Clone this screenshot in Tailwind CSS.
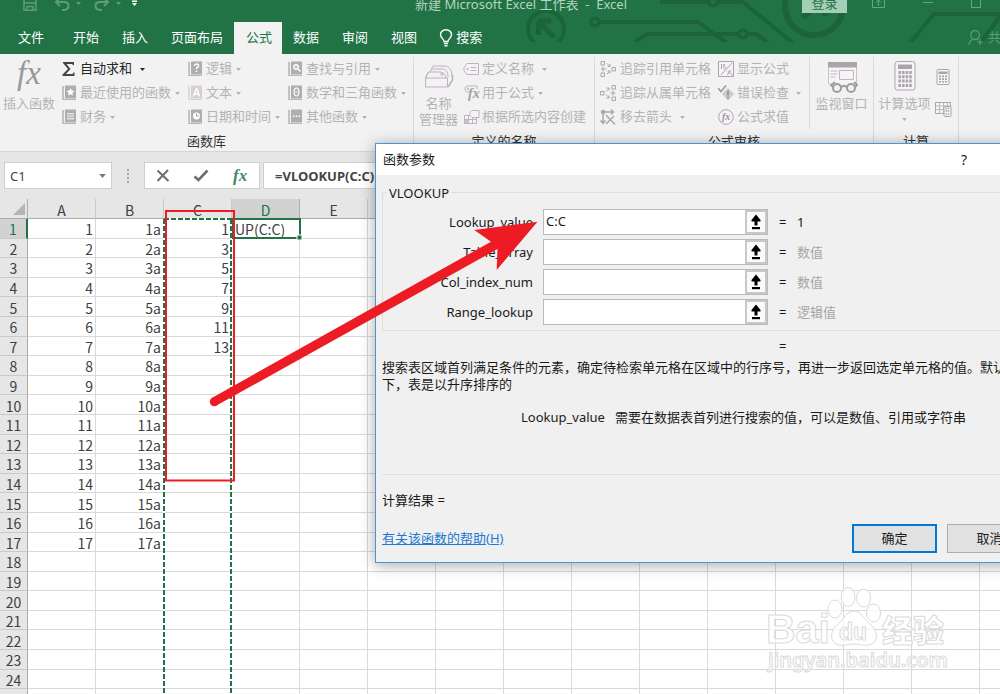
<!DOCTYPE html>
<html lang="zh-CN">
<head>
<meta charset="utf-8">
<title>新建 Microsoft Excel 工作表 - Excel</title>
<script src="https://cdn.jsdelivr.net/npm/@tailwindcss/browser@4"></script>
</head>
<body class="relative flex h-screen flex-col overflow-hidden bg-[#e6e6e6] font-['Noto_Sans','Noto_Sans_CJK_SC',sans-serif] text-[13px] text-[#262626]">

<!-- Shared icon shapes -->
<svg class="hidden" aria-hidden="true">
  <symbol id="book" viewBox="0 0 14 16"><path d="M0 1h2v14H0z" fill="#c4c1c4"/><path d="M3 .5h11v13H3z" fill="#b0adb0"/><path d="M1 14.500h13" stroke="#b8b5b8" fill="none"/></symbol>
  <symbol id="book-light" viewBox="0 0 14 16"><path d="M0 1h2v14H0z" fill="#dedade"/><path d="M3 .5h11v13H3z" fill="#d6d0d6"/><path d="M1 14.500h13" stroke="#d6d0d6" fill="none"/></symbol>
  <symbol id="caret" viewBox="0 0 5 3"><path d="M0 0h5L2.500 3z" fill="currentColor"/></symbol>
  <symbol id="pick" viewBox="0 0 12 16"><path d="M6 .5 10.500 6v1.500H7.500V11.500h-3V7.500H1.500V6z" fill="#000"/><path d="M2 13h8v2.200H2z" fill="#000"/></symbol>
</svg>

<header class="relative shrink-0 overflow-hidden bg-[#217346] text-white">
  <svg class="absolute left-[500px] top-0 h-[42px] w-[520px]" viewBox="500 0 520 42" fill="none" stroke="#1d6339" stroke-width="4" aria-hidden="true">
    <circle cx="546" cy="29" r="18"/>
    <path d="M537 21h14M538.500 21v14M539 22l15 15" stroke-width="5"/>
    <circle cx="595" cy="22" r="4" stroke-width="3"/>
    <path d="M599 22h99l29 21M634 43l13-9h92M748 34h8l12 9M660 2h49M718 2h25l50 41"/>
    <circle cx="743" cy="34" r="4" stroke-width="3"/>
    <circle cx="713" cy="2" r="4" stroke-width="3"/>
    <circle cx="814" cy="6" r="29" stroke-width="6"/>
    <path d="M803 18l16-16M825 16V0M810 3h16" stroke-width="6"/>
    <path d="M910 43l24-29h90M980 43l22-29"/>
  </svg>

  <div class="relative flex h-[22px] items-start">
    <div class="flex w-[415px] shrink-0 gap-2 pl-[22px] text-[#5f9c7a]">
      <svg class="h-3 w-4" viewBox="0 0 16 12" fill="none" stroke="currentColor" stroke-width="1.500"><path d="M2-2v12.200h12V-2M2 3h12M5 10V6.500h6V10"/></svg>
      <svg class="ml-2 h-3 w-7" viewBox="0 0 28 12" fill="none" stroke="currentColor" stroke-width="2"><path d="M6-2 2 2l4 4M2 2h8c6 0 6 7 0 8H8"/><path d="M22 2h5l-2.500 3z" fill="currentColor" stroke="none"/></svg>
      <svg class="ml-1 h-3 w-7" viewBox="0 0 28 12" fill="none" stroke="currentColor" stroke-width="2"><path d="M10-2l4 4-4 4M14 2H6c-6 0-6 7 0 8h2"/><path d="M22 2h5l-2.500 3z" fill="currentColor" stroke="none"/></svg>
      <svg class="-ml-1 h-2 w-5" viewBox="0 0 20 8" fill="#fff"><path d="M6 .5h5V2H6zM6 3h5L8.500 6z"/></svg>
    </div>
    <p class="-mt-2 w-[387px] shrink-0 whitespace-pre leading-6 text-[#b4d3c1]">新建 Microsoft Excel 工作表  -  Excel</p>
    <div class="flex flex-1 items-start text-[#6aa384]">
      <button class="-mt-2 h-[21px] w-[45px] shrink-0 bg-[#a3cfb6] leading-5 text-[#217346]">登录</button>
      <svg class="ml-[25px] h-3 w-[14px] shrink-0" viewBox="0 0 14 12" fill="none" stroke="currentColor"><path d="M.5-4v11.500h12V-4M6.500 6V0M4 2.500 6.500 0 9 2.500"/></svg>
      <svg class="ml-9 h-3 w-[14px] shrink-0" viewBox="0 0 14 12" stroke="currentColor"><path d="M1 2.500h10"/></svg>
      <svg class="ml-[35px] h-3 w-[14px] shrink-0" viewBox="0 0 14 12" fill="none" stroke="currentColor"><path d="M.5-4v11.500h9V-4"/></svg>
    </div>
  </div>

  <nav class="relative flex h-8 items-stretch whitespace-nowrap">
    <button class="pl-[18px] pr-[17px]">文件</button>
    <button class="pl-3 pr-[11px]">开始</button>
    <button class="pl-3 pr-[11px]">插入</button>
    <button class="pl-3 pr-[11px]">页面布局</button>
    <button class="bg-[#f2f2f2] pl-3 pr-[10px] text-[#217346]">公式</button>
    <button class="pl-[11px] pr-[11px]">数据</button>
    <button class="pl-3 pr-[11px]">审阅</button>
    <button class="pl-3 pr-[11px]">视图</button>
    <button class="flex items-center gap-[3px] pl-[11px]">
      <svg class="h-[18px] w-[14px]" viewBox="0 0 14 18" fill="none" stroke="#fff" stroke-width="1.400"><path d="M5 12.500c0-2.500-3.500-3.500-3.500-7a5.500 4.800 0 0 1 11 0c0 3.500-3.500 4.500-3.500 7zM5 14.500h4M5.500 16.700h3"/></svg>
      搜索
    </button>
    <button class="absolute -right-3.5 top-1.5 flex items-center gap-1 text-[#5f9c7a]">
      <svg class="h-4 w-4" viewBox="0 0 16 16" fill="none" stroke="currentColor" stroke-width="1.200"><circle cx="7" cy="5" r="4.300"/><path d="M1 15c0-3 2-5 4.500-6M9 9l1 1M12 9v6M9 12h6"/></svg>
      共享
    </button>
  </nav>
</header>

<section class="flex h-[98px] shrink-0 border-b border-[#d5d5d5] bg-[#f2f2f2] whitespace-nowrap pt-[3px] text-[#b4b2b4]" aria-label="公式">

  <!-- Function library -->
  <div class="flex w-[414px] shrink-0 flex-col border-r border-[#dadada]">
    <div class="flex h-[72px]">
      <button class="flex w-[62px] flex-col items-center pr-1 leading-4">
        <svg class="h-[38px] w-9" viewBox="0 0 36 38"><text x="6" y="27" font-family="Liberation Serif" font-style="italic" font-size="33" fill="#9a989a">fx</text></svg>
        插入函数
      </button>
      <div class="grid flex-1 grid-flow-col grid-cols-[126px_100px_1fr] grid-rows-[repeat(3,24px)]">
        <button class="flex items-center gap-1 text-[#262626]"><svg class="h-4 w-[14px]" viewBox="0 0 14 16"><path d="M1 1h11v3h-1L10 3H4.500l4 5-4.500 5h6.500l1-1.500h1V15H.5v-1.500L6 8 1 2z" fill="#444"/></svg>自动求和<svg class="ml-1 h-[3px] w-[5px]"><use href="#caret"/></svg></button>
        <button class="flex items-center gap-1"><svg class="h-4 w-[14px]" viewBox="0 0 14 16"><use href="#book"/><path d="m8.500 3 1.200 2.600 2.800.3-2.100 1.900.6 2.800-2.500-1.400L6 10.600l.6-2.800-2.100-1.900 2.800-.3z" fill="#fff"/></svg>最近使用的函数<svg class="h-[3px] w-[5px]"><use href="#caret"/></svg></button>
        <button class="flex items-center gap-1"><svg class="h-4 w-[14px]" viewBox="0 0 14 16"><use href="#book"/><path d="M5 4h7v6.500H5z" fill="#e4e1e4"/><path d="M5 6h7M5 8.300h7" stroke="#b0adb0"/></svg>财务<svg class="h-[3px] w-[5px]"><use href="#caret"/></svg></button>
        <button class="flex items-center gap-1"><svg class="h-4 w-[14px]" viewBox="0 0 14 16"><use href="#book"/><path d="M6.500 5c0-2.800 4.500-2.300 4 0-.3 1.200-2 1.300-2 3M8.500 9.500v1.500" fill="none" stroke="#fff" stroke-width="1.500"/></svg>逻辑<svg class="h-[3px] w-[5px]"><use href="#caret"/></svg></button>
        <button class="flex items-center gap-1"><svg class="h-4 w-[14px]" viewBox="0 0 14 16"><use href="#book-light"/><path d="M5.500 11.500 8 4h1l2.500 7.500M6.500 9h4" fill="none" stroke="#fff" stroke-width="1.400"/></svg>文本<svg class="h-[3px] w-[5px]"><use href="#caret"/></svg></button>
        <button class="flex items-center gap-1"><svg class="h-4 w-[14px]" viewBox="0 0 14 16"><use href="#book"/><circle cx="8.500" cy="7" r="3.500" fill="#fff"/><path d="M8.500 4.500V7h2.500" fill="none" stroke="#aaa7aa"/></svg>日期和时间<svg class="h-[3px] w-[5px]"><use href="#caret"/></svg></button>
        <button class="flex items-center gap-1"><svg class="h-4 w-[14px]" viewBox="0 0 14 16"><use href="#book"/><circle cx="8" cy="6" r="2.400" fill="#c9c6c9" stroke="#fff" stroke-width="1.200"/><path d="m10 8 2.500 2.500" stroke="#fff" stroke-width="1.500"/></svg>查找与引用<svg class="h-[3px] w-[5px]"><use href="#caret"/></svg></button>
        <button class="flex items-center gap-1"><svg class="h-4 w-[14px]" viewBox="0 0 14 16"><use href="#book"/><ellipse cx="8.500" cy="7" rx="2.400" ry="4" fill="none" stroke="#fff" stroke-width="1.200"/><path d="M7.500 7h2" stroke="#fff"/></svg>数学和三角函数<svg class="h-[3px] w-[5px]"><use href="#caret"/></svg></button>
        <button class="flex items-center gap-1"><svg class="h-4 w-[14px]" viewBox="0 0 14 16"><use href="#book"/><path d="M5 6.500h1.500V8H5zM7.800 6.500h1.500V8H7.800zM10.600 6.500h1.500V8h-1.500z" fill="#fff"/></svg>其他函数<svg class="h-[3px] w-[5px]"><use href="#caret"/></svg></button>
      </div>
    </div>
    <h2 class="pt-[3px] text-center leading-[18px] text-[#333]">函数库</h2>
  </div>

  <!-- Defined names -->
  <div class="flex w-[181px] shrink-0 flex-col border-r border-[#dadada]">
    <div class="flex h-[72px]">
      <button class="flex w-[49px] flex-col items-center leading-4">
        <svg class="h-[38px] w-[30px]" viewBox="0 0 30 38" fill="#f5f0f5" stroke="#b9b5b9"><path d="m6 15 3-6h11c5 0 8 4 8 9v6l-4 6"/><path d="M8 12h10c4 0 6 3 6 8M5 15h10c5 0 7 3 7 8" fill="none"/><path d="M1.500 21h22v9h-22z"/><path d="m1.500 21 3-6M24 30l4.500-7v-5" stroke-width="1.500"/><circle cx="18" cy="17" r="1.200"/></svg>
        <span class="block whitespace-pre-line">名称
管理器</span>
      </button>
      <div class="grid flex-1 grid-rows-[repeat(3,24px)]">
        <button class="flex items-center gap-0.5"><svg class="h-4 w-[17px]" viewBox="0 0 17 16" fill="#f7f2f7" stroke="#b9b5b9"><path d="M4 2.500h11.500v11H4L1 9.500v-3z"/><path d="M7.500 6.500h6M7.500 9.500h6"/><circle cx="4.500" cy="8" r=".8"/></svg>定义名称<svg class="ml-1.5 h-[3px] w-[5px]"><use href="#caret"/></svg></button>
        <button class="flex items-center gap-0.5"><svg class="h-4 w-[17px]" viewBox="0 0 17 16"><path d="M2 5.500v-3l3-1.500h9v3M2 5.500 5 8" fill="#f7f2f7" stroke="#b9b5b9"/><circle cx="5" cy="4" r=".8" fill="none" stroke="#b9b5b9"/><text x="5" y="13" font-family="Liberation Serif" font-style="italic" font-weight="bold" font-size="14" fill="#a3a0a3">fx</text></svg>用于公式<svg class="ml-0.5 h-[3px] w-[5px]"><use href="#caret"/></svg></button>
        <button class="flex items-center gap-0.5"><svg class="h-4 w-[17px]" viewBox="0 0 17 16" fill="#f7f2f7" stroke="#b9b5b9"><path d="M1.500 6.500h12v8h-12z"/><path d="M1.500 10.500h4v4h-4z" fill="#c7c3c7"/><path d="M5.500 6.500v8M9.500 6.500v8M1.500 10.500h12"/><path d="M9 1.500h7v7H9l-2-2v-3z"/></svg>根据所选内容创建</button>
      </div>
    </div>
    <h2 class="pt-[3px] text-center leading-[18px] text-[#333]">定义的名称</h2>
  </div>

  <!-- Formula auditing -->
  <div class="flex w-[279px] shrink-0 flex-col border-r border-[#dadada]">
    <div class="flex h-[72px]">
      <div class="grid w-[215px] grid-flow-col grid-cols-[118px_1fr] grid-rows-[repeat(3,24px)] border-r border-[#dadada] pl-[5px]">
        <button class="flex items-center gap-1"><svg class="h-4 w-4" viewBox="0 0 16 16" fill="none" stroke="#a9a6a9"><path d="M1 .5h3.500V4H1zM1 12h3.500v3.500H1zM12 6.500h3.500V10H12zM1 8h5M3 5.500v5M7 2.500l3 3M7 13l3-3M10 3v2.500H7.500M10 12.500V10H7.500"/></svg>追踪引用单元格</button>
        <button class="flex items-center gap-1"><svg class="h-4 w-4" viewBox="0 0 16 16" fill="none" stroke="#a9a6a9"><path d="M12 .5h3.500V4H12zM12 12h3.500v3.500H12zM.5 6.500H4V10H.5zM10.500 8h5M13 5.500v5M6 6.500l3-3M6 9.500l3 3M6.500 3H9v2.500M6.500 13H9v-2.500"/></svg>追踪从属单元格</button>
        <button class="flex items-center gap-1"><svg class="h-4 w-4" viewBox="0 0 16 16" fill="none" stroke="#a9a6a9" stroke-width="1.400"><path d="M2 3h11M11 .5 13.500 3 11 5.500M3 3v11M.5 11.500 3 14.500l2.500-3M6 6l9 9.500M14 7l-8 8"/><circle cx="3" cy="3" r="1.500" fill="#a9a6a9"/></svg>移去箭头<svg class="ml-1 h-[3px] w-[5px]"><use href="#caret"/></svg></button>
        <button class="flex items-center gap-[3px]"><svg class="h-4 w-4" viewBox="0 0 16 16" fill="#f7f2f7" stroke="#a9a6a9"><path d="M.5.5h15v15H.5z"/><path d="M3.500 3v5M7 3.500H5.500v2h1.500c1.500 2-.5 3-1.500 2.200M14 2 3 14M9 14c2 0 1.500-5 4-5M9.500 11h3M12 12l3 2.500"/></svg>显示公式</button>
        <button class="flex items-center gap-[3px]"><svg class="h-4 w-4" viewBox="0 0 16 16"><path d="m10 3 6 6-6 6.500L4 9z" fill="#cdc9cd"/><path d="M10 5.500v5M10 11.500v2" stroke="#8f8c8f" stroke-width="1.500"/><path d="m0 3 3 3.500L8 .5" fill="none" stroke="#9a979a" stroke-width="1.500"/></svg>错误检查<svg class="ml-1 h-[3px] w-[5px]"><use href="#caret"/></svg></button>
        <button class="flex items-center gap-[3px]"><svg class="h-4 w-4" viewBox="0 0 16 16"><circle cx="8" cy="8" r="7.300" fill="#f7f2f7" stroke="#a9a6a9"/><text x="4" y="11" font-family="Liberation Serif" font-style="italic" font-weight="bold" font-size="10" fill="#989598">fx</text></svg>公式求值</button>
      </div>
      <button class="flex flex-1 flex-col items-center leading-4">
        <svg class="h-[38px] w-8" viewBox="0 0 32 38"><path d="M2.500 5.500h28v21h-28z" fill="#f8f3f8" stroke="#c5c1c5"/><path d="M2 5h29v5.500H2z" fill="#a9a6a9"/><path d="M13.500 13.500h14v9h-14zM4.500 14h7M4.500 17h7M4.500 20h5" fill="none" stroke="#bcb8bc"/><path d="M4 32V26h28v8H4z" fill="#f2f2f2"/><g fill="#f2f2f2" stroke="#a09da0" stroke-width="2"><circle cx="11" cy="31" r="4"/><circle cx="25" cy="31" r="4"/><path d="M15 30c1.500-1.500 4.500-1.500 6 0M7 30l-2-2 4-3M29 30l2-2-3-3" fill="none"/></g></svg>
        监视窗口
      </button>
    </div>
    <h2 class="pt-[3px] text-center leading-[18px] text-[#333]">公式审核</h2>
  </div>

  <!-- Calculation -->
  <div class="flex w-[85px] shrink-0 flex-col border-r border-[#dadada]">
    <div class="flex h-[72px]">
      <button class="flex w-[61px] flex-col items-center leading-4">
        <svg class="h-[38px] w-6" viewBox="0 0 24 38"><rect x="2" y="4.500" width="20" height="28.500" rx="2.500" fill="#f8f3f8" stroke="#a9a6a9"/><path d="M5 7.500h14V12H5z" fill="#a9a6a9"/><path d="M6.700 14v16M10.300 14v16M13.900 14v16M17.500 14v16" stroke="#a9a6a9" stroke-width="2.600" stroke-dasharray="3 1.300"/></svg>
        计算选项
        <svg class="mt-[7px] h-[3px] w-[5px]"><use href="#caret"/></svg>
      </button>
      <div class="flex flex-col gap-4 pt-3">
        <button aria-label="开始计算"><svg class="h-4 w-[17px]" viewBox="0 0 17 16"><rect x="2" y=".5" width="12" height="15" rx="1" fill="#f8f3f8" stroke="#a9a6a9"/><path d="M3.500 2.500h9V5h-9z" fill="#a9a6a9"/><path d="M5 6.500v8M8 6.500v8M11 6.500v8" stroke="#a9a6a9" stroke-width="2" stroke-dasharray="1.700 1"/></svg></button>
        <button aria-label="计算工作表"><svg class="h-4 w-[17px]" viewBox="0 0 17 16" fill="#f8f3f8" stroke="#a9a6a9"><path d="M.5 1.500h15v11H.5z"/><path d="M4.500 1.500v11M8.500 1.500v11M12.500 1.500v11M.5 5h15M.5 8.500h15" stroke="#bcb8bc"/><rect x="9" y="5.500" width="7" height="10" rx="1"/><path d="M10.500 7.500h4M10.500 10h4M10.500 13h4" stroke-dasharray="1.500 .7" stroke-width="1.500"/></svg></button>
      </div>
    </div>
    <h2 class="pt-[3px] text-center leading-[18px] text-[#333]">计算</h2>
  </div>
</section>

<!-- Formula bar -->
<div class="flex h-[47px] shrink-0 items-start pl-1 pt-[10px]">
  <div class="relative w-[108px] shrink-0">
    <input aria-label="名称框" value="C1" class="h-[27px] w-full border border-[#cfcfcf] bg-white pl-[5px] text-[#444]">
    <svg class="absolute right-1.5 top-3 h-1 w-[7px]" viewBox="0 0 5 3" fill="#777"><path d="M0 0h5L2.500 3z"/></svg>
  </div>
  <svg class="h-[27px] w-8 shrink-0" viewBox="0 0 32 27" fill="#a6a6a6"><path d="M15 7h2v2h-2zM15 11h2v2h-2zM15 15h2v2h-2zM15 19h2v2h-2z"/></svg>
  <div class="flex h-[27px] w-[116px] shrink-0 items-center justify-between border border-[#cfcfcf] bg-white pl-[11px] pr-3">
    <button aria-label="取消"><svg class="h-[13px] w-3.5" viewBox="0 0 14 13"><path d="M1.500 1.500 12.500 12M12 1 1.500 12" stroke="#6e6e6e" stroke-width="2" fill="none"/></svg></button>
    <button aria-label="输入"><svg class="h-[13px] w-4" viewBox="0 0 16 13"><path d="M1.500 7.500 5.500 11 14.500 1.500" stroke="#6e6e6e" stroke-width="2.600" fill="none"/></svg></button>
    <button aria-label="插入函数"><svg class="h-5 w-4" viewBox="0 0 16 20"><text x="2" y="15" font-family="Liberation Serif" font-style="italic" font-weight="bold" font-size="17" fill="#3f8a60">fx</text></svg></button>
  </div>
  <input aria-label="编辑栏" value="=VLOOKUP(C:C)" class="ml-[3px] h-[27px] flex-1 border border-[#cfcfcf] bg-white pl-[11px] font-bold text-[#444]">
</div>

<!-- Worksheet -->
<main class="relative flex-1 overflow-hidden bg-white">
  <table class="h-[510px] w-[1048px] table-fixed border-separate border-spacing-0 font-['Noto_Sans_CJK_SC',sans-serif] text-[14px] leading-[14px] text-[#404040]">
    <colgroup id="cols"><col class="w-7"></colgroup>
    <thead><tr id="letters" class="h-5 bg-[#e6e6e6]"></tr></thead>
    <tbody id="rows"></tbody>
  </table>
  <svg class="absolute inset-0 h-full w-full" fill="none" aria-hidden="true">
    <path d="M232 20h68v19h-68z" stroke="#217346" stroke-width="2"/>
    <path d="M297 36h5v5h-5z" fill="#217346" stroke="#fff"/>
    <path d="M164 20h68M164 20v500M231 20v500" stroke="#fff" stroke-width="2"/>
    <path d="M164 20h68M164 20v500M231 20v500" stroke="#217346" stroke-width="2" stroke-dasharray="5 2"/>
  </svg>
</main>

<!-- Watermark -->
<svg class="absolute bottom-0 right-0 h-[120px] w-60" viewBox="760 574 240 120" fill="#fff" fill-opacity=".75" stroke="#dadada" stroke-linejoin="round" aria-hidden="true">
  <g font-family="Liberation Sans" font-weight="bold">
    <text x="766" y="643" font-size="41">Bai</text>
    <ellipse cx="835" cy="609" rx="7" ry="9"/><ellipse cx="848" cy="597" rx="7" ry="9.500"/><ellipse cx="863.500" cy="598" rx="7" ry="9"/><ellipse cx="873.500" cy="613" rx="7" ry="9"/>
    <path d="M854 611c8 0 10 9 17 14 8 7 7 18-2 20-7 1-9-1-15-1s-9 2-15 1c-9-2-10-13-2-20 7-5 9-14 17-14z"/>
    <text x="839" y="640" font-size="23">du</text>
  </g>
  <text x="882" y="642" font-family="Noto Sans CJK SC" font-weight="900" font-size="31">经验</text>
  <text x="768" y="667" font-family="Noto Sans" font-weight="600" font-size="20">jingyan.baidu.com</text>
</svg>

<!-- Function arguments dialog -->
<div role="dialog" aria-labelledby="dlg-title" class="absolute left-[375px] top-[143px] flex h-[420px] w-[670px] flex-col border border-[#4a96d4] bg-[#f0f0f0] text-[#1a1a1a] shadow-[0_2px_14px_rgba(0,0,0,0.35)]">
  <div class="flex h-[31px] shrink-0 items-center bg-white pl-[7px]">
    <h1 id="dlg-title" class="w-[578px]">函数参数</h1>
    <button aria-label="帮助" class="text-sm">?</button>
  </div>
  <fieldset class="relative mx-1.5 mt-[17px] h-[139px] shrink-0 border border-[#dfdfdf] pt-4">
    <legend class="absolute -top-2.5 left-1 bg-[#f0f0f0] px-0.5 leading-5">VLOOKUP</legend>
    <div class="grid gap-1">
      <div class="flex h-[26px] items-center"><label for="f1" class="w-[151px] pr-px pt-0.5 text-right">Lookup_value</label><div class="ml-[9px] flex h-[26px] w-[225px] border border-[#b9b9be] bg-white"><input id="f1" value="C:C" class="min-w-0 flex-1 pl-0.5"><button aria-label="选择区域" class="flex w-[22px] items-center justify-center border-2 border-[#c8c8c8] bg-[#fafafa]"><svg class="h-4 w-3"><use href="#pick"/></svg></button></div><span class="ml-[11px] w-[18px] pt-0.5">=</span><output class="pt-0.5">1</output></div>
      <div class="flex h-[26px] items-center"><label for="f2" class="w-[151px] pr-px pt-0.5 text-right">Table_array</label><div class="ml-[9px] flex h-[26px] w-[225px] border border-[#b9b9be] bg-white"><input id="f2" class="min-w-0 flex-1 pl-0.5"><button aria-label="选择区域" class="flex w-[22px] items-center justify-center border-2 border-[#c8c8c8] bg-[#fafafa]"><svg class="h-4 w-3"><use href="#pick"/></svg></button></div><span class="ml-[11px] w-[18px] pt-0.5">=</span><output class="pt-0.5 text-[#a5a5a5]">数值</output></div>
      <div class="flex h-[26px] items-center"><label for="f3" class="w-[151px] pr-px pt-0.5 text-right">Col_index_num</label><div class="ml-[9px] flex h-[26px] w-[225px] border border-[#b9b9be] bg-white"><input id="f3" class="min-w-0 flex-1 pl-0.5"><button aria-label="选择区域" class="flex w-[22px] items-center justify-center border-2 border-[#c8c8c8] bg-[#fafafa]"><svg class="h-4 w-3"><use href="#pick"/></svg></button></div><span class="ml-[11px] w-[18px] pt-0.5">=</span><output class="pt-0.5 text-[#a5a5a5]">数值</output></div>
      <div class="flex h-[26px] items-center"><label for="f4" class="w-[151px] pr-px pt-0.5 text-right">Range_lookup</label><div class="ml-[9px] flex h-[26px] w-[225px] border border-[#b9b9be] bg-white"><input id="f4" class="min-w-0 flex-1 pl-0.5"><button aria-label="选择区域" class="flex w-[22px] items-center justify-center border-2 border-[#c8c8c8] bg-[#fafafa]"><svg class="h-4 w-3"><use href="#pick"/></svg></button></div><span class="ml-[11px] w-[18px] pt-0.5">=</span><output class="pt-0.5 text-[#a5a5a5]">逻辑值</output></div>
    </div>
  </fieldset>
  <p class="pl-[403px] pt-[5px] leading-5">=</p>
  <p class="whitespace-nowrap pl-1.5 pt-[3px] leading-[17px]">搜索表区域首列满足条件的元素，确定待检索单元格在区域中的行序号，再进一步返回选定单元格的值。默认情况<br>下，表是以升序排序的</p>
  <p class="flex gap-[10px] pl-[145px] pt-[14px] leading-5"><span>Lookup_value</span><span>需要在数据表首列进行搜索的值，可以是数值、引用或字符串</span></p>
  <hr class="mx-1.5 mt-[47px] border-[#dfdfdf]">
  <p class="pl-1.5 pt-[15px] leading-5">计算结果 =</p>
  <div class="flex items-center pl-1.5 pt-[14px]">
    <a href="#help" class="w-[470px] text-[#1e78d2] underline">有关该函数的帮助(H)</a>
    <button class="h-[29px] w-[85px] border-2 border-[#0078d7] bg-[#e1e1e1]">确定</button>
    <button class="ml-[10px] h-[29px] w-[85px] border border-[#adadad] bg-[#e1e1e1]">取消</button>
  </div>
</div>

<!-- Red callout: outlined range and arrow to the first argument -->
<svg class="pointer-events-none absolute left-0 top-0 h-[694px] w-[1000px]" viewBox="0 0 1000 694" aria-hidden="true">
  <path d="M166 211h68v269.500h-68z" fill="none" stroke="#ed1c24" stroke-width="2"/>
  <circle cx="214.300" cy="401.700" r="4.500" fill="#ed1c24"/>
  <path d="M212.200 397.700 491 241.700 474.300 230 537.500 221.700 496.700 270 497.500 249 216.500 405.600z" fill="#ed1c24"/>
</svg>

<script>
  // Column C holds the lookup values; A and B are filled for the first 17 rows.
  const lookup = [1, 3, 5, 7, 9, 11, 13];
  const letters = 'ABCDEFGHIJKLMNO'.split('');
  document.getElementById('cols').innerHTML += letters.map(() => '<col class="w-[68px]">').join('');
  document.getElementById('letters').innerHTML =
    '<th class="border-b border-r border-[#ababab] p-0"><svg class="ml-2.5 h-4 w-4" viewBox="0 0 16 16"><path d="M15 2v12H3z" fill="#b4b4b4"/></svg></th>' +
    letters.map(l => l === 'D'
      ? '<th class="border-b border-r border-[#ababab] bg-[#d2d2d2] p-0 pt-0.5 font-normal text-[#217346]">D</th>'
      : `<th class="border-b border-r border-b-[#ababab] border-r-[#c9c9c9] p-0 pt-0.5 font-normal">${l}</th>`).join('');
  let html = '';
  for (let r = 1; r <= 25; r++) {
    html += '<tr>' + (r === 1
      ? '<th class="border-b border-r-2 border-b-[#c9c9c9] border-r-[#217346] bg-[#d2d2d2] p-0 pt-0.5 font-normal text-[#217346]">1</th>'
      : `<th class="border-b border-r border-b-[#c9c9c9] border-r-[#ababab] bg-[#e6e6e6] p-0 pt-0.5 font-normal">${r}</th>`);
    letters.forEach(l => {
      let v = '';
      if (l === 'A' && r <= 17) v = r;
      if (l === 'B' && r <= 17) v = r + 'a';
      if (l === 'C' && lookup[r - 1]) v = lookup[r - 1];
      html += l === 'D' && r === 1
        ? '<td class="border-b border-r border-[#d9d9d9] p-0 pl-[3px] pt-0.5">UP(C:C)</td>'
        : `<td class="border-b border-r border-[#d9d9d9] p-0 pr-0.5 pt-0.5 text-right">${v}</td>`;
    });
    html += '</tr>';
  }
  document.getElementById('rows').innerHTML = html;
</script>
</body>
</html>
